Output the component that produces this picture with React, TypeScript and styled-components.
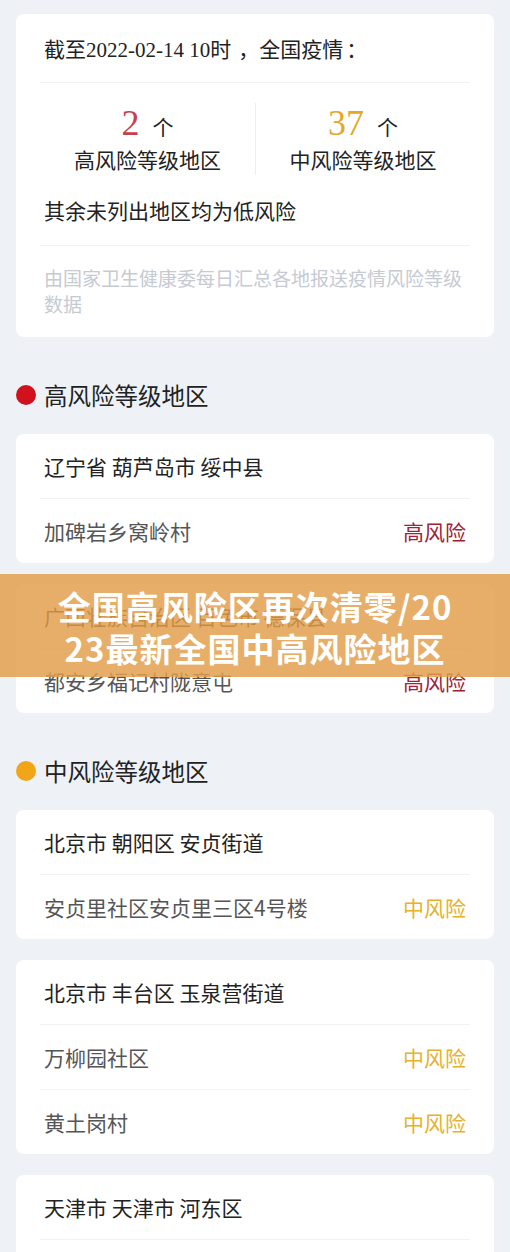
import React from "react";
import styled, { createGlobalStyle } from "styled-components";

const GlobalStyle = createGlobalStyle`
  html, body {
    margin: 0;
    padding: 0;
    background: #eef2f6;
  }
  body {
    font-family: "Noto Sans CJK SC", "Noto Sans", sans-serif;
    color: #222;
  }
`;

const Page = styled.div`
  position: relative;
  display: flex;
  flex-direction: column;
  gap: 21px;
  padding: 14px 16px 0;
`;

const Card = styled.div`
  background: #fff;
  border-radius: 8px;
  padding: 0 24px;
`;

const SummaryTitle = styled.div`
  height: 68px;
  display: flex;
  align-items: center;
  padding: 0 4px;
  border-bottom: 1px solid #f1f2f4;
  font-family: "Liberation Serif", "Noto Sans CJK SC", serif;
  font-size: 21px;
  color: #222;
  white-space: pre;
`;

const Punct = styled.span<{ $shift?: number }>`
  font-family: "Noto Sans CJK SC", sans-serif;
  padding-left: ${(p) => p.$shift ?? 0}px;
`;

const Stats = styled.div`
  display: grid;
  grid-template-columns: 1fr 1fr;
  padding-top: 20px;
`;

const StatCol = styled.div<{ $divided?: boolean }>`
  height: 72px;
  display: flex;
  flex-direction: column;
  align-items: center;
  border-left: ${(p) => (p.$divided ? "1px solid #eceef1" : "none")};
`;

const StatCount = styled.div`
  display: flex;
  align-items: baseline;
  gap: 13px;
  height: 40px;
  line-height: 40px;
`;

const StatNumber = styled.span<{ $color: string }>`
  font-family: "Liberation Serif", serif;
  font-size: 36px;
  color: ${(p) => p.$color};
`;

const StatUnit = styled.span`
  font-family: "Noto Sans CJK SC", sans-serif;
  font-size: 21px;
  color: #222;
`;

const StatLabel = styled.div`
  font-family: "Noto Sans CJK SC", sans-serif;
  font-size: 21px;
  line-height: 32px;
  color: #222;
`;

const NoteRow = styled.div`
  height: 70px;
  display: flex;
  align-items: center;
  padding: 0 4px;
  border-bottom: 1px solid #f1f2f4;
  font-size: 21px;
  color: #222;
`;

const Footnote = styled.div`
  padding: 19px 4px 20px;
  font-size: 19px;
  line-height: 26px;
  color: #c6cad2;
`;

const SectionHeader = styled.div`
  display: flex;
  align-items: center;
  gap: 8px;
  height: 40px;
  margin: 17px 0 -2px;
  font-size: 23.5px;
  color: #222;
`;

const Dot = styled.span<{ $color: string }>`
  width: 20px;
  height: 20px;
  border-radius: 50%;
  background: ${(p) => p.$color};
  flex: none;
`;

const Row = styled.div`
  height: 64px;
  display: flex;
  align-items: center;
  justify-content: space-between;
  padding: 0 4px;
  border-bottom: 1px solid #f1f2f4;
  font-size: 21px;
  &:last-child {
    border-bottom: none;
  }
`;

const Place = styled.span<{ $primary?: boolean }>`
  color: ${(p) => (p.$primary ? "#222" : "#555")};
`;

const Level = styled.span<{ $color: string }>`
  color: ${(p) => p.$color};
`;

const Banner = styled.div`
  position: absolute;
  top: 574px;
  left: 0;
  right: 0;
  height: 103px;
  box-sizing: border-box;
  padding: 11px 48px 0;
  background: rgba(226, 158, 76, 0.84);
  color: #fff;
  font-family: "Noto Sans CJK SC", sans-serif;
  font-weight: 700;
  font-size: 33px;
  letter-spacing: 1px;
  line-height: 42px;
  text-align: center;
  word-break: break-all;
`;

const HIGH = "#a0223a";
const MID = "#e6b12c";

type Group = { title: string; places: string[] };

const highGroups: Group[] = [
  { title: "辽宁省 葫芦岛市 绥中县", places: ["加碑岩乡窝岭村"] },
  { title: "广西壮族自治区 百色市 德保县", places: ["都安乡福记村陇意屯"] },
];

const midGroups: Group[] = [
  { title: "北京市 朝阳区 安贞街道", places: ["安贞里社区安贞里三区4号楼"] },
  { title: "北京市 丰台区 玉泉营街道", places: ["万柳园社区", "黄土岗村"] },
  { title: "天津市 天津市 河东区", places: ["大直沽街道"] },
];

const GroupCard = ({ group, label, color }: { group: Group; label: string; color: string }) => (
  <Card>
    <Row>
      <Place $primary>{group.title}</Place>
    </Row>
    {group.places.map((p) => (
      <Row key={p}>
        <Place>{p}</Place>
        <Level $color={color}>{label}</Level>
      </Row>
    ))}
  </Card>
);

export default function App() {
  return (
    <>
      <GlobalStyle />
      <Page>
        <Card>
          <SummaryTitle>
            截至2022-02-14 10时<Punct $shift={7}>，</Punct>全国疫情<Punct $shift={3}>：</Punct>
          </SummaryTitle>
          <Stats>
            <StatCol>
              <StatCount>
                <StatNumber $color="#c5414d">2</StatNumber>
                <StatUnit>个</StatUnit>
              </StatCount>
              <StatLabel>高风险等级地区</StatLabel>
            </StatCol>
            <StatCol $divided>
              <StatCount>
                <StatNumber $color="#e4a72e">37</StatNumber>
                <StatUnit>个</StatUnit>
              </StatCount>
              <StatLabel>中风险等级地区</StatLabel>
            </StatCol>
          </Stats>
          <NoteRow>其余未列出地区均为低风险</NoteRow>
          <Footnote>由国家卫生健康委每日汇总各地报送疫情风险等级数据</Footnote>
        </Card>

        <SectionHeader>
          <Dot $color="#d0121c" />
          高风险等级地区
        </SectionHeader>
        {highGroups.map((g) => (
          <GroupCard key={g.title} group={g} label="高风险" color={HIGH} />
        ))}

        <SectionHeader>
          <Dot $color="#f2a516" />
          中风险等级地区
        </SectionHeader>
        {midGroups.map((g) => (
          <GroupCard key={g.title} group={g} label="中风险" color={MID} />
        ))}

        <Banner>全国高风险区再次清零/2023最新全国中高风险地区</Banner>
      </Page>
    </>
  );
}
